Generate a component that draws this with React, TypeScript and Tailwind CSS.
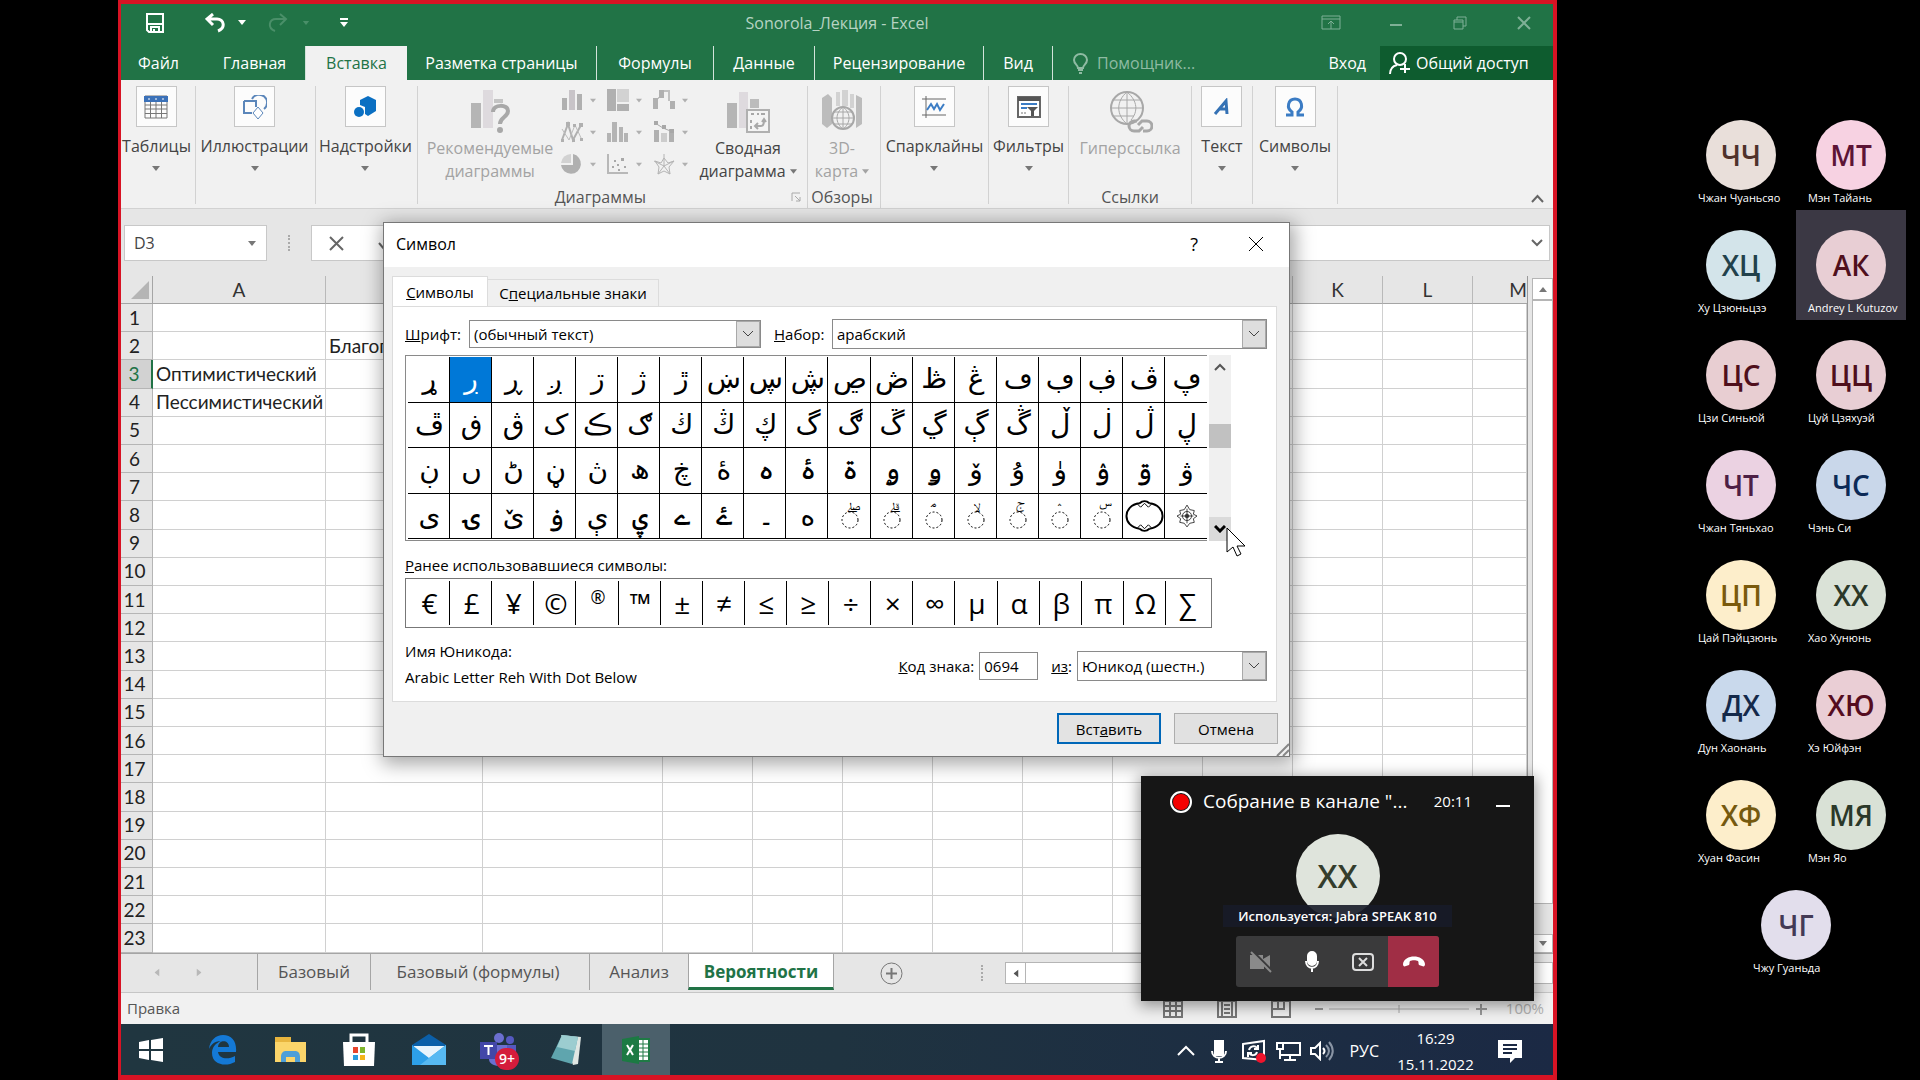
import React from 'react';

interface Participant {
    initials: string;
    name: string;
    colors: string;
    active?: boolean;
}

const participants: Participant[] = [
    { initials: 'ЧЧ', name: 'Чжан Чуаньсяо', colors: 'bg-[#e9dfda] text-[#4f322b]' },
    { initials: 'МТ', name: 'Мэн Тайань', colors: 'bg-[#f7d2e2] text-[#5c1436]' },
    { initials: 'ХЦ', name: 'Ху Цзюньцзэ', colors: 'bg-[#d3e4ea] text-[#22414b]' },
    { initials: 'АК', name: 'Andrey L Kutuzov', colors: 'bg-[#e8ced4] text-[#4f0f1c]', active: true },
    { initials: 'ЦС', name: 'Цзи Синьюй', colors: 'bg-[#e8ced2] text-[#4f0f1c]' },
    { initials: 'ЦЦ', name: 'Цуй Цзяхуэй', colors: 'bg-[#e8ced4] text-[#4f0f1c]' },
    { initials: 'ЧТ', name: 'Чжан Тяньхао', colors: 'bg-[#ebd2e2] text-[#4d1f45]' },
    { initials: 'ЧС', name: 'Чэнь Си', colors: 'bg-[#c9d7ea] text-[#0c2a57]' },
    { initials: 'ЦП', name: 'Цай Пэйцзюнь', colors: 'bg-[#fdeecb] text-[#7a5a0c]' },
    { initials: 'ХХ', name: 'Хао Хунюнь', colors: 'bg-[#dae2d7] text-[#2b3829]' },
    { initials: 'ДХ', name: 'Дун Хаонань', colors: 'bg-[#c9d9ec] text-[#14294a]' },
    { initials: 'ХЮ', name: 'Хэ Юйфэн', colors: 'bg-[#eaced5] text-[#540c20]' },
    { initials: 'ХФ', name: 'Хуан Фасин', colors: 'bg-[#fdeecb] text-[#75590f]' },
    { initials: 'МЯ', name: 'Мэн Яо', colors: 'bg-[#d9e1d6] text-[#2b3829]' },
    { initials: 'ЧГ', name: 'Чжу Гуаньда', colors: 'bg-[#e2deec] text-[#433a55]' },
];

const columns = [
    { id: 'A', width: 'w-[173px]' },
    { id: 'B', width: 'w-[157px]' },
    { id: 'C', width: 'w-[180px]' },
    { id: 'D', width: 'w-[90px]' },
    { id: 'E', width: 'w-[90px]' },
    { id: 'F', width: 'w-[90px]' },
    { id: 'G', width: 'w-[90px]' },
    { id: 'H', width: 'w-[90px]' },
    { id: 'I', width: 'w-[90px]' },
    { id: 'J', width: 'w-[90px]' },
    { id: 'K', width: 'w-[90px]' },
    { id: 'L', width: 'w-[90px]' },
    { id: 'M', width: '' },
];

const rows = Array.from({ length: 23 }, (_, i) => i + 1);

const cells: Record<string, string> = {
    B2: 'Благоп',
    A3: 'Оптимистический',
    A4: 'Пессимистический',
};

// U+0693 .. U+06DE, 4 rows of 19
const FIRST_CODE = 0x0693;
const SELECTED_CODE = 0x0694;
const symbolRows = [0, 1, 2, 3].map(r => Array.from({ length: 19 }, (_, c) => FIRST_CODE + r * 19 + c));

const recentSymbols = ['€', '£', '¥', '©', '®', '™', '±', '≠', '≤', '≥', '÷', '×', '∞', 'µ', 'α', 'β', 'π', 'Ω', '∑'];

const Caret: React.FC<{ className?: string }> = ({ className = '' }) => (
    <svg width="8" height="5" viewBox="0 0 8 5" className={className} aria-hidden="true">
        <path d="M0 0h8L4 5z" fill="currentColor" />
    </svg>
);

const Chevron: React.FC<{ className?: string }> = ({ className = '' }) => (
    <svg width="12" height="8" viewBox="0 0 12 8" className={className} fill="none" stroke="currentColor" aria-hidden="true">
        <path d="M1 1l5 5 5-5" />
    </svg>
);

const TitleBar = () => (
    <header className="grid h-[42px] grid-cols-3 items-center bg-[#217346] pb-[5px] text-white">
        <div className="flex h-full items-center pl-[24px]">
            <button aria-label="Сохранить" className="mr-[40px]">
                <svg width="20" height="20" viewBox="0 0 20 20" fill="none" stroke="white" strokeWidth="2">
                    <path d="M2 1h16v18H4l-2-2zM2 11h16M6 19v-5h8v5M9 16v3" />
                </svg>
            </button>
            <button aria-label="Отменить" className="flex items-center gap-[11px]">
                <svg width="22" height="20" viewBox="0 0 22 20" fill="none" stroke="white" strokeWidth="3">
                    <path d="M8 1L2 6l6 6M2 6h10c7 0 9 9 1 12" />
                </svg>
                <Caret />
            </button>
            <button aria-label="Вернуть" className="ml-[20px] flex items-center gap-[14px] text-[#4a8f69]">
                <svg width="22" height="20" viewBox="0 0 22 20" fill="none" stroke="currentColor" strokeWidth="2">
                    <path d="M14 1l6 5-6 6M20 6H10c-7 0-9 9-1 12" />
                </svg>
                <Caret className="h-1" />
            </button>
            <button aria-label="Настройка панели" className="ml-[29px]">
                <svg width="10" height="9" viewBox="0 0 10 9" fill="white">
                    <path d="M1 0h8v2H1zM1 4h8L5 9z" />
                </svg>
            </button>
        </div>
        <h1 className="text-center text-base text-[#b6d3c3]">Sonorola_Лекция - Excel</h1>
        <div className="flex items-center justify-end gap-[46px] pr-[20px] text-[#7fb096]">
            <button aria-label="Параметры ленты">
                <svg width="20" height="16" viewBox="0 0 20 16" fill="none" stroke="currentColor">
                    <path d="M1 1h18v13H1zM1 4h18M10 14V6M7 9l3-3 3 3" />
                </svg>
            </button>
            <button aria-label="Свернуть">
                <svg width="18" height="16" viewBox="0 0 18 16" fill="none" stroke="currentColor" strokeWidth="2">
                    <path d="M3 10h12" />
                </svg>
            </button>
            <button aria-label="Развернуть">
                <svg width="18" height="16" viewBox="0 0 18 16" fill="none" stroke="currentColor">
                    <path d="M3 5h9v9H3zM3 7h9M6 5V2h9v9h-3" />
                </svg>
            </button>
            <button aria-label="Закрыть">
                <svg width="18" height="16" viewBox="0 0 18 16" fill="none" stroke="currentColor" strokeWidth="2">
                    <path d="M3 2l12 12M15 2L3 14" />
                </svg>
            </button>
        </div>
    </header>
);

const ribbonTabs = [
    { label: 'Файл', className: 'w-[83px] pr-2' },
    { label: 'Главная', className: 'w-[102px] border-r' },
    { label: 'Вставка', className: 'w-[101px] bg-[#f1f1f1] text-[#217346]' },
    { label: 'Разметка страницы', className: 'w-[190px] border-r' },
    { label: 'Формулы', className: 'w-[117px] border-r' },
    { label: 'Данные', className: 'w-[101px] border-r' },
    { label: 'Рецензирование', className: 'w-[169px] border-r' },
    { label: 'Вид', className: 'w-[69px] border-r' },
];

const RibbonTabs = () => (
    <nav className="flex h-[34px] bg-[#217346] text-base text-white">
        {ribbonTabs.map(tab => (
            <button key={tab.label} className={`whitespace-nowrap border-white/80 ${tab.className}`}>
                {tab.label}
            </button>
        ))}
        <button className="ml-[20px] flex items-center gap-[9px] text-[#8fbba3]">
            <svg width="15" height="21" viewBox="0 0 15 21" fill="none" stroke="currentColor" strokeWidth="2">
                <path d="M5 15c0-3-4-4-4-8a6.500 6 0 0 1 13 0c0 4-4 5-4 8zM5 17h5M6 20h3" />
            </svg>
            Помощник...
        </button>
        <button className="ml-auto px-[14px]">Вход</button>
        <button className="flex w-[173px] items-center gap-[5px] bg-[#0e5c2f] pl-[9px]">
            <svg width="22" height="24" viewBox="0 0 22 24" fill="none" stroke="white" strokeWidth="2">
                <circle cx="11" cy="8" r="6" />
                <path d="M1 23c0-6 3-8 7-9M16 13v9M11 18h10" />
            </svg>
            Общий доступ
        </button>
    </nav>
);

interface CollapsedGroupProps {
    label: string;
    width: string;
    children: React.ReactNode;
}

const CollapsedGroup: React.FC<CollapsedGroupProps> = ({ label, width, children }) => (
    <div className={`mb-[4px] flex shrink-0 justify-center border-r border-[#d2d2d2] ${width}`}>
        <button className="flex flex-col items-center whitespace-nowrap text-base leading-[22px] text-[#444]">
            <span className="mb-[8px] flex h-[41px] w-[41px] items-center justify-center border border-[#c6c6c6] bg-[#fcfcfc]">
                {children}
            </span>
            {label}
            <Caret className="mt-[9px] text-[#777]" />
        </button>
    </div>
);

// the nine small chart buttons, all disabled
const chartIcons = [
    {
        label: 'Гистограмма',
        icon: (
            <>
                <path d="M1 9h5v12H1zM16 5h5v16h-5z" fill="#b0b0b0" />
                <path d="M8 1h6v20H8z" fill="#c8c4c8" />
            </>
        ),
    },
    {
        label: 'Иерархия',
        icon: (
            <>
                <path d="M0 0h9v22H0zM10 15h12v7H10z" fill="#b0b0b0" />
                <path d="M10 0h12v13H10z" fill="#d2d2d2" />
            </>
        ),
    },
    {
        label: 'Каскадная',
        icon: (
            <>
                <path d="M0 9h5v11H0zM6 1h5v8H6zM17 12h5v8h-5z" fill="#b0b0b0" />
                <path d="M5 9h1M11 2h5v10" fill="none" stroke="#c0c0c0" strokeWidth="2" />
            </>
        ),
    },
    {
        label: 'График',
        icon: (
            <>
                <path d="M1 19L7 3l5 16 8-15" fill="none" stroke="#b0b0b0" strokeWidth="2" />
                <path d="M1 8l7 11 6-15 7 15" fill="none" stroke="#bcbcbc" />
                <path d="M5 1h4v4H5zM18 2h4v4h-4zM0 18h3v3H0zM11 18h3v3h-3zM12 3h3v3h-3zM19 17h3v3h-3z" fill="#b0b0b0" />
            </>
        ),
    },
    {
        label: 'Статистическая',
        icon: <path d="M0 12h4v9H0zM5 1h5v20H5zM12 6h4v15h-4zM17 12h4v9h-4z" fill="#b4b4b4" />,
    },
    {
        label: 'Комбинированная',
        icon: (
            <>
                <path d="M1 9h5v12H1zM16 8h5v13h-5z" fill="#b0b0b0" />
                <path d="M8 12h6v9H8z" fill="#cccccc" />
                <path d="M2 2l8 5 10 4" fill="none" stroke="#a8a8a8" />
                <path d="M1 0h4v4H1zM9 4h4v4H9zM17 8h4v4h-4z" fill="#a8a8a8" />
            </>
        ),
    },
    {
        label: 'Круговая',
        icon: (
            <>
                <path d="M0 10A10 10 0 0 1 10 1v9z" fill="#d2d2d2" />
                <path d="M12 1a10 10 0 1 1-12 11h12z" fill="#b0b0b0" />
            </>
        ),
    },
    {
        label: 'Точечная',
        icon: (
            <>
                <path d="M1 1v19h20" fill="none" stroke="#b8b8b8" strokeWidth="2" />
                <path d="M5 13h2v2H5zM7 7h2v2H7zM10 11h2v2h-2zM14 5h3v3h-3zM17 13h2v2h-2zM11 16h2v2h-2z" fill="#a8a8a8" />
            </>
        ),
    },
    {
        label: 'Лепестковая',
        icon: (
            <path
                d="M11 1v12M11 13L1 8M11 13l10-5M11 13l-6 8M11 13l6 8M11 5L8 10 2 8l4 6-1 7 6-3 6 3-1-7 5-6-6 2z"
                fill="none"
                stroke="#b4b4b4"
            />
        ),
    },
];

const Ribbon = () => (
    <section className="flex h-[129px] border-b border-[#d2d2d2] bg-[#f1f1f1] pt-[6px] text-base text-[#444]">
        <CollapsedGroup label="Таблицы" width="w-[75px] pr-[3px]">
            <svg width="24" height="24" viewBox="0 0 24 24" fill="none">
                <path d="M1 1h22v22H1zM1 10h22M1 14h22M1 18.500h22M6.500 5v18M12 5v18M17.500 5v18" stroke="#777" />
                <path d="M0 1h24v6H0z" fill="#3b71b8" />
                <path d="M4 4h2M11 4h2M18 4h2" stroke="white" />
            </svg>
        </CollapsedGroup>
        <CollapsedGroup label="Иллюстрации" width="w-[120px] pr-[2px]">
            <svg width="24" height="24" viewBox="0 0 24 24" fill="none" stroke="#5b86ba">
                <path d="M1 6h12v6M1 6v12h8" strokeWidth="2" />
                <path d="M9 4a8 8 0 1 1 12 10" strokeWidth="2" />
                <path d="M15 12l5 6-5 6-5-6z" fill="white" />
            </svg>
        </CollapsedGroup>
        <CollapsedGroup label="Надстройки" width="w-[102px] pr-[2px]">
            <svg width="22" height="22" viewBox="0 0 22 22" fill="#0a6fc2">
                <path d="M14 0l8 4v11l-8 5-3-2v-7l-5-2V4z" />
                <circle cx="5" cy="16" r="5" />
            </svg>
        </CollapsedGroup>

        <div className="flex w-[390px] shrink-0 flex-col justify-between border-r border-[#d2d2d2]">
            <div className="flex pl-[7px]">
                <button disabled className="flex w-[130px] flex-col items-center leading-[23px] text-[#a3a3a3]">
                    <svg width="40" height="44" viewBox="0 0 40 44" className="mb-[3px] mt-1">
                        <path d="M1 13h10v25H1z" fill="#b5b5b5" />
                        <path d="M13 0h10v38H13z" fill="#dedade" />
                        <path d="M24 9h9v4h-9z" fill="#c4c4c4" />
                        <path d="M23 22c0-8 15-8 15-1 0 6-8 6-8 13" fill="none" stroke="#a8a8a8" strokeWidth="4" />
                        <circle cx="30" cy="40" r="3" fill="#a8a8a8" />
                    </svg>
                    <span>Рекомендуемые диаграммы</span>
                </button>
                <div className="grid grid-cols-3 content-start gap-y-[10px] pl-[6px] pt-[3px]">
                    {chartIcons.map(chart => (
                        <button key={chart.label} disabled aria-label={chart.label} className="flex w-[46px] items-center gap-[7px] text-[#b0b0b0]">
                            <svg width="22" height="22" viewBox="0 0 22 22">
                                {chart.icon}
                            </svg>
                            <Caret className="w-[6px]" />
                        </button>
                    ))}
                </div>
                <button className="flex w-[98px] flex-col items-center whitespace-nowrap leading-[23px]">
                    <svg width="44" height="44" viewBox="0 0 44 44" className="mb-[3px] mt-1">
                        <path d="M1 13h10v25H1z" fill="#b5b5b5" />
                        <path d="M13 2h9v36h-9z" fill="#dedade" />
                        <path d="M24 9h9v9h-9z" fill="#bcbcbc" />
                        <path d="M21 20h22v22H21z" fill="#f4f4f4" stroke="#b0b0b0" strokeWidth="2" />
                        <path d="M25 24h3M31 24h2M35 24h4M25 30v3M25 36v3M30 36h5c3 0 3-3 3-6M36 32l2-3 2 3M32 33l-3 3 3 3" fill="none" stroke="#a8a8a8" strokeWidth="2" />
                    </svg>
                    Сводная
                    <span className="flex items-center gap-1">
                        диаграмма <Caret className="w-[7px] text-[#777]" />
                    </span>
                </button>
            </div>
            <div className="flex items-center justify-end gap-[145px] pr-[6px] leading-[22px] text-[#555]">
                Диаграммы
                <svg width="10" height="10" viewBox="0 0 10 10" fill="none" stroke="#aaa">
                    <path d="M1 9V1h8M4 4l5 5M9 5v4H5" />
                </svg>
            </div>
        </div>

        <div className="flex w-[73px] shrink-0 flex-col items-center justify-between border-r border-[#d2d2d2] pr-1">
            <button disabled className="flex flex-col items-center leading-[23px] text-[#a3a3a3]">
                <svg width="42" height="44" viewBox="0 0 42 44" className="mb-[3px] mt-1">
                    <path d="M1 8l6-4 4 4v26l-5 4-5-4zM35 5l6 3v26l-6 4z" fill="#bcbcbc" />
                    <path d="M15 2h4v14h-4zM21 0h6v16h-6zM29 4h4v14h-4z" fill="#d2d2d2" />
                    <circle cx="22" cy="28" r="11" fill="#f1f1f1" stroke="#a8a8a8" strokeWidth="2" />
                    <path d="M11 28h22M13 22h18M13 34h18M22 17v22M22 17c-8 6-8 16 0 22M22 17c8 6 8 16 0 22" fill="none" stroke="#a8a8a8" />
                </svg>
                3D-
                <span className="flex items-center gap-1">
                    карта <Caret className="w-[7px]" />
                </span>
            </button>
            <span className="leading-[22px] text-[#555]">Обзоры</span>
        </div>

        <CollapsedGroup label="Спарклайны" width="w-[108px]">
            <svg width="24" height="22" viewBox="0 0 24 22" fill="none">
                <path d="M4 0v22M0 3h24M0 19h24" stroke="#666" />
                <path d="M5 14l4-6 3 5 3-5 3 6 4-6" stroke="#3b7cc4" strokeWidth="2" />
            </svg>
        </CollapsedGroup>
        <CollapsedGroup label="Фильтры" width="w-[80px]">
            <svg width="24" height="22" viewBox="0 0 24 22" fill="none">
                <path d="M1 1h22v20H1z" fill="white" stroke="#666" strokeWidth="2" />
                <path d="M1 1h22v4H1z" fill="#555" />
                <path d="M4 8h16M4 12h6" stroke="#3b7cc4" strokeWidth="2" />
                <path d="M4 17h6" stroke="#777" strokeDasharray="2 1" />
                <path d="M10 11h11l-4 4v5h-3v-5z" fill="#555" />
            </svg>
        </CollapsedGroup>
        <div className="mb-[4px] flex w-[123px] shrink-0 flex-col items-center justify-between border-r border-[#d2d2d2]">
            <button disabled className="flex flex-col items-center leading-[23px] text-[#a3a3a3]">
                <svg width="46" height="44" viewBox="0 0 46 44" className="mb-[3px] mt-1" fill="none" stroke="#a8a8a8">
                    <circle cx="20" cy="18" r="16" strokeWidth="2" />
                    <path d="M4 18h32M7 10h26M7 26h20M20 2v32M20 2c-11 9-11 23 0 32M20 2c11 9 11 20 4 28" />
                    <path d="M30 31h-3a4.500 4.500 0 0 0 0 10h5l4-4M36 41h4a4.500 4.500 0 0 0 0-10h-5l-4 4" strokeWidth="3" />
                </svg>
                Гиперссылка
            </button>
            <span className="-mb-[4px] leading-[22px] text-[#555]">Ссылки</span>
        </div>
        <CollapsedGroup label="Текст" width="w-[61px]">
            <svg width="18" height="18" viewBox="0 0 18 18" fill="none" stroke="#3572b5" strokeWidth="3">
                <path d="M2 16L13 3l1 13M6 11h8" />
            </svg>
        </CollapsedGroup>
        <CollapsedGroup label="Символы" width="w-[85px]">
            <svg width="20" height="20" viewBox="0 0 20 20" fill="none" stroke="#3b7cc4" strokeWidth="3">
                <path d="M1 18h6v-3C1 11 3 2 10 2s9 9 3 13v3h6" />
            </svg>
        </CollapsedGroup>
        <button aria-label="Свернуть ленту" className="mb-[1px] ml-auto mr-[9px] self-end pb-1 text-[#666]">
            <svg width="13" height="9" viewBox="0 0 13 9" fill="none" stroke="currentColor" strokeWidth="2">
                <path d="M1 8l5.500-6L12 8" />
            </svg>
        </button>
    </section>
);

const FormulaBar = () => (
    <div className="flex h-[67px] items-start bg-[#e6e6e6] pl-[3px] pr-[3px] pt-[16px]">
        <div className="flex h-[36px] w-[143px] items-center border border-[#c8c8c8] bg-white pr-[9px]">
            <input aria-label="Имя" defaultValue="D3" className="w-full min-w-0 px-[9px] text-base text-[#444] outline-none" />
            <Caret className="w-[10px] shrink-0 text-[#777]" />
        </div>
        <div className="flex w-[44px] justify-center self-stretch pt-[10px]">
            <span className="h-[16px] border-l-2 border-dotted border-[#aaa]" />
        </div>
        <div className="flex h-[36px] flex-1 items-center border border-[#c8c8c8] bg-white pl-[16px] pr-[6px] text-[#666]">
            <button aria-label="Отмена">
                <svg width="17" height="15" viewBox="0 0 17 15" fill="none" stroke="currentColor" strokeWidth="2">
                    <path d="M2 1l13 13M15 1L2 14" />
                </svg>
            </button>
            <button aria-label="Ввод" className="ml-[33px]">
                <svg width="16" height="14" viewBox="0 0 16 14" fill="none" stroke="currentColor" strokeWidth="2">
                    <path d="M1 7l5 6L15 1" />
                </svg>
            </button>
            <input aria-label="Строка формул" className="flex-1 outline-none" />
            <Chevron className="stroke-2" />
        </div>
    </div>
);

const Sheet = () => (
    <div className="flex min-h-0 flex-1 bg-[#e6e6e6]">
        <table className="h-full flex-1 table-fixed border-separate border-spacing-0 border-r border-[#999] font-[Lato,'Open_Sans',sans-serif] text-[19px] leading-[22px] text-[#222]">
            <thead>
                <tr className="h-[28px] bg-[#e6e6e6] text-[#333]">
                    <th aria-label="Выделить все" className="w-[32px] border-b border-r border-[#a5a5a5] p-0 align-bottom">
                        <svg width="18" height="18" viewBox="0 0 18 18" className="mb-1 ml-[10px]">
                            <path d="M18 0v18H0z" fill="#b5b5b5" />
                        </svg>
                    </th>
                    {columns.map(col => (
                        <th
                            key={col.id}
                            className={`border-b border-[#a5a5a5] p-0 font-normal ${col.width} ${col.id === 'M' ? 'text-right' : 'border-r border-r-[#b9b9b9]'}`}
                        >
                            {col.id}
                        </th>
                    ))}
                </tr>
            </thead>
            <tbody>
                {rows.map(row => (
                    <tr key={row}>
                        <th
                            scope="row"
                            className={`border-b border-[#b5b5b5] p-0 pr-1 text-center font-normal ${row === 3 ? 'border-r-2 border-r-[#217346] bg-[#d2d2d2] text-[#217346]' : 'border-r bg-[#e6e6e6]'}`}
                        >
                            {row}
                        </th>
                        {columns.map(col => (
                            <td key={col.id} className="overflow-hidden whitespace-nowrap border-b border-r border-[#d0d0d0] bg-white p-0 pl-[3px]">
                                {cells[col.id + row]}
                            </td>
                        ))}
                    </tr>
                ))}
            </tbody>
        </table>
        <div className="ml-[4px] flex w-[21px] flex-col pt-[2px]">
            <button aria-label="Прокрутить вверх" className="flex h-[22px] items-center justify-center border border-[#b5b5b5] bg-white text-[#777]">
                <Caret className="rotate-180" />
            </button>
            <div className="flex-1 border border-[#b5b5b5] bg-white" />
            <div className="h-[30px]" />
            <button aria-label="Прокрутить вниз" className="flex h-[19px] items-center justify-center border border-[#b5b5b5] bg-white text-[#777]">
                <Caret />
            </button>
        </div>
    </div>
);

const SheetTabs = () => (
    <div className="flex h-[40px] items-start border-b border-t border-b-[#c6c6c6] border-t-[#a5a5a5] bg-[#e6e6e6] text-[17px] text-[#555]">
        <div className="flex h-[36px] w-[137px] items-center gap-[34px] border-r border-[#a5a5a5] pl-[32px] text-[#b8b8b8]">
            <button aria-label="Предыдущий лист"><Caret className="rotate-90" /></button>
            <button aria-label="Следующий лист"><Caret className="-rotate-90" /></button>
        </div>
        <button className="h-[36px] w-[113px] border-r border-[#a5a5a5]">Базовый</button>
        <button className="h-[36px] w-[219px] border-r border-[#a5a5a5] pr-[4px]">Базовый (формулы)</button>
        <button className="h-[36px] w-[98px]">Анализ</button>
        <button className="h-[36px] w-[146px] border-x border-b-[3px] border-x-[#a5a5a5] border-b-[#217346] bg-white pt-[3px] font-bold text-[#217346]">Вероятности</button>
        <button aria-label="Новый лист" className="ml-[46px] mt-[8px]">
            <svg width="23" height="23" viewBox="0 0 23 23" fill="none" stroke="#777">
                <circle cx="11.500" cy="11.500" r="10.500" />
                <path d="M11.500 6v11M6 11.500h11" strokeWidth="2" />
            </svg>
        </button>
        <span className="ml-[78px] mt-[11px] h-[16px] border-l-2 border-dotted border-[#aaa]" />
        <div className="ml-[22px] mt-[8px] flex h-[22px] flex-1 border border-[#b5b5b5] bg-white">
            <button aria-label="Прокрутить влево" className="flex w-[20px] items-center justify-center border-r border-[#b5b5b5] text-[#555]">
                <Caret className="rotate-90" />
            </button>
        </div>
    </div>
);

const StatusBar = () => (
    <footer className="flex h-[31px] items-center bg-[#f1f1f1] text-[15px] text-[#555]">
        <span className="pl-[6px]">Правка</span>
        <div className="ml-auto flex items-center pr-[9px] text-[#777]">
            <button aria-label="Обычный">
                <svg width="20" height="18" viewBox="0 0 20 18" fill="none" stroke="currentColor" strokeWidth="2">
                    <path d="M1 1h18v16H1zM7 1v16M13 1v16M1 6h18M1 11h18" />
                </svg>
            </button>
            <button aria-label="Разметка страницы" className="ml-[34px]">
                <svg width="20" height="18" viewBox="0 0 20 18" fill="none" stroke="currentColor" strokeWidth="2">
                    <path d="M1 1h18v16H1zM5 1v16M15 1v16M7 5h6M7 9h6M7 13h6" />
                </svg>
            </button>
            <button aria-label="Страничный" className="ml-[34px]">
                <svg width="20" height="18" viewBox="0 0 20 18" fill="none" stroke="currentColor" strokeWidth="2">
                    <path d="M1 1h18v16H1zM1 9h12V1M7 1v8" />
                </svg>
            </button>
            <svg width="172" height="14" viewBox="0 0 172 14" className="ml-[24px]" fill="none" stroke="#aaa">
                <path d="M0 7h8M161 7h12M166 2v11" strokeWidth="2" stroke="#999" />
                <path d="M14 7h140M84 3v8" />
            </svg>
            <span className="ml-[19px] text-[#b0b0b0]">100%</span>
        </div>
    </footer>
);

const Taskbar = () => (
    <nav className="flex h-[51px] items-center bg-linear-to-r from-[#203640] via-[#1f3340] to-[#1b2944] text-white">
        <button aria-label="Пуск" className="flex w-[60px] justify-center">
            <svg width="24" height="24" viewBox="0 0 24 24" fill="white">
                <path d="M0 4l10-2v9H0zM12 2l12-2v11H12zM0 13h10v9L0 20zM12 13h12v11l-12-2z" />
            </svg>
        </button>
        <button aria-label="Edge" className="flex w-[84px] justify-center">
            <svg width="28" height="30" viewBox="0 0 28 30" fill="#1479d6">
                <path d="M0 14C1 5 7 0 14 0c9 0 14 7 13 17H9c1 7 10 8 17 4v6C17 32 3 30 3 18c0-6 4-10 9-12C5 6 2 10 0 14zM9 12h11c0-7-10-8-11 0z" />
            </svg>
        </button>
        <button aria-label="Проводник" className="flex w-[52px] justify-center">
            <svg width="32" height="27" viewBox="0 0 32 27">
                <path d="M0 1h16v5h15v20H0z" fill="#e8b53e" />
                <path d="M0 6h31v20H0z" fill="#fbd56a" />
                <path d="M6 26v-5c0-5 3-6 5-6h9c3 0 5 2 5 6v5h-5v-5h-9v5z" fill="#4d9fd8" />
            </svg>
        </button>
        <button aria-label="Store" className="flex w-[84px] justify-center">
            <svg width="34" height="34" viewBox="0 0 34 34">
                <path d="M9 10V2h16v8" fill="none" stroke="white" strokeWidth="3" />
                <path d="M1 9h32l-1 24H2z" fill="white" />
                <path d="M11 14h5v6h-5z" fill="#e8452c" />
                <path d="M18 14h5v6h-5z" fill="#7fb52b" />
                <path d="M11 22h5v5h-5z" fill="#2a9de0" />
                <path d="M18 22h5v5h-5z" fill="#f4b41a" />
            </svg>
        </button>
        <button aria-label="Почта" className="flex w-[56px] justify-center">
            <svg width="34" height="31" viewBox="0 0 34 31">
                <path d="M0 11L17 0l17 11v20H0z" fill="#0b5fa8" />
                <path d="M2 12h30v12H2z" fill="#e8f4fc" />
                <path d="M0 11l17 13 17-13v20H0z" fill="#2d9fe8" />
                <path d="M17 24l17-13v20H8z" fill="#57b9f2" />
            </svg>
        </button>
        <button aria-label="Teams" className="relative flex w-[82px] justify-center">
            <svg width="36" height="34" viewBox="0 0 36 34">
                <circle cx="19" cy="5" r="5" fill="#6b6fd0" />
                <circle cx="30" cy="7" r="4" fill="#5559c0" />
                <path d="M24 12h12v12c0 5-8 7-12 3z" fill="#5559c0" />
                <path d="M9 12h18v14c0 9-18 9-18 0z" fill="#6b6fd0" />
                <path d="M0 9h17v17H0z" fill="#4347a8" />
                <path d="M4 13h9M8.500 13v9" stroke="white" strokeWidth="2" />
            </svg>
            <span className="absolute right-[20px] top-[15px] flex h-[22px] w-[24px] items-center justify-center rounded-full bg-[#d41c3c] text-sm font-semibold">9+</span>
        </button>
        <button aria-label="Блокнот" className="flex w-[63px] justify-center pr-[10px]">
            <svg width="32" height="32" viewBox="0 0 32 32">
                <path d="M11 1l20 2-3 27-5 1z" fill="#dfe6e2" />
                <path d="M12 1l16 2-6 27L1 24z" fill="#5fa5ae" />
                <path d="M12 1l16 2-3 14L7 13z" fill="#9ccdd0" />
            </svg>
        </button>
        <button aria-label="Excel" className="flex h-full w-[68px] items-center justify-center bg-[#4b606b]">
            <svg width="28" height="28" viewBox="0 0 28 28">
                <path d="M14 3h13v22H14z" fill="white" stroke="#1f7a45" strokeWidth="2" />
                <path d="M16 8h10M16 12h10M16 16h10M16 20h10M21 4v20" stroke="#1f7a45" />
                <path d="M0 3l17-3v28L0 25z" fill="#1c7a43" />
                <path d="M5 9l6 10M11 9L5 19" stroke="white" strokeWidth="2" />
            </svg>
        </button>

        <div className="ml-auto flex items-center pr-[31px] pt-[2px] text-[15px]">
            <button aria-label="Скрытые значки">
                <svg width="18" height="12" viewBox="0 0 18 12" fill="none" stroke="white" strokeWidth="2">
                    <path d="M1 10l8-8 8 8" />
                </svg>
            </button>
            <button aria-label="Микрофон" className="ml-[16px]">
                <svg width="16" height="24" viewBox="0 0 16 24" fill="none" stroke="white" strokeWidth="2">
                    <path d="M4 2h8v14H4z" fill="white" />
                    <path d="M1 12c0 9 14 9 14 0M8 19v4M4 23h8" />
                </svg>
            </button>
            <button aria-label="Обновление" className="ml-[14px]">
                <svg width="26" height="24" viewBox="0 0 26 24" fill="none" stroke="white" strokeWidth="2">
                    <path d="M2 5l21-3v19L2 19z" />
                    <path d="M8 11c1-4 6-5 8-2M17 6v4h-4M16 13c-1 4-6 4-8 1M7 18v-4h4" />
                    <circle cx="20" cy="19" r="5" fill="#f0142c" stroke="none" />
                </svg>
            </button>
            <button aria-label="Сеть" className="ml-[9px]">
                <svg width="25" height="20" viewBox="0 0 25 20" fill="none" stroke="white" strokeWidth="2">
                    <path d="M8 2h16v12H5M14 14v4M8 19h12M1 2h6v6H1zM4 8v10" />
                </svg>
            </button>
            <button aria-label="Громкость" className="ml-[9px]">
                <svg width="24" height="20" viewBox="0 0 24 20" fill="none" stroke="white" strokeWidth="2">
                    <path d="M1 7h4l5-5v16l-5-5H1zM13 7c2 2 2 4 0 6" />
                    <path d="M16 4c4 4 4 8 0 12M19 1c5 6 5 12 0 18" stroke="#8994a4" />
                </svg>
            </button>
            <button className="ml-[15px] text-base">РУС</button>
            <div className="ml-[18px] w-[77px] text-center leading-[26px]">
                <time className="block">16:29</time>
                <time className="block">15.11.2022</time>
            </div>
            <button aria-label="Уведомления" className="ml-[24px]">
                <svg width="24" height="24" viewBox="0 0 24 24">
                    <path d="M0 1h24v18h-7l-5 5v-5H0z" fill="white" />
                    <path d="M5 6h14M5 10h14M5 14h9" stroke="#1b2944" strokeWidth="2" />
                </svg>
            </button>
        </div>
    </nav>
);

interface DropdownProps {
    id: string;
    value: string;
    className: string;
}

const Dropdown: React.FC<DropdownProps> = ({ id, value, className }) => (
    <div className={`grid border border-[#8a8a8a] bg-white ${className}`}>
        <select id={id} className="col-start-1 row-start-1 w-full appearance-none px-[4px] outline-none">
            <option>{value}</option>
        </select>
        <span className="pointer-events-none col-start-1 row-start-1 flex w-[24px] items-center justify-center justify-self-end border border-[#a9a9a9] bg-[#dedede] text-[#444]">
            <Chevron />
        </span>
    </div>
);

const SymbolGlyph: React.FC<{ code: number }> = ({ code }) => {
    // Quranic marks sit above a dotted placeholder circle
    if (code >= 0x06d6 && code <= 0x06dc) {
        return (
            <span className="flex flex-col items-center pb-[6px]">
                <span className="h-[14px] w-[22px] text-center text-[28px] leading-[44px]">{'\u00a0' + String.fromCharCode(code)}</span>
                <svg width="18" height="18" viewBox="0 0 18 18" fill="none" stroke="black" strokeDasharray="2 2" aria-hidden="true">
                    <circle cx="9" cy="9" r="8" />
                </svg>
            </span>
        );
    }
    if (code === 0x06dd) {
        return (
            <svg width="40" height="34" viewBox="0 0 40 34" fill="none" stroke="black" strokeWidth="2" aria-label="End of Ayah">
                <path d="M15 4C-3 6-3 28 15 30M25 4c18 2 18 24 0 26M15 4c3-3 7-3 10 0M15 30c3 3 7 3 10 0" />
                <path d="M13 5l3 3 4-4 4 4 3-3M13 29l3-3 4 4 4-4 3 3" strokeWidth="1" />
            </svg>
        );
    }
    if (code === 0x06de) {
        return (
            <svg width="20" height="24" viewBox="0 0 22 24" fill="none" stroke="#333" aria-label="Rub El Hizb">
                <path d="M11 0l3 5 5 1-1 4 4 2-4 3 1 4-5 1-3 4-3-4-5-1 1-4-4-3 4-2-1-4 5-1z" />
                <circle cx="11" cy="12" r="5" />
                <circle cx="11" cy="12" r="2" fill="#333" />
                <path d="M11 4v16M4 12h14" />
            </svg>
        );
    }
    return <>{String.fromCharCode(code)}</>;
};

const SymbolDialog = () => (
    <div
        role="dialog"
        aria-label="Символ"
        className="absolute left-[262px] top-[218px] flex w-[907px] flex-col border border-[#777] bg-[#f0f0f0] text-[15px] leading-5 text-black shadow-[2px_4px_18px_3px_rgba(0,0,0,0.35)]"
    >
        <div className="flex h-[44px] items-center bg-white pb-[2px] pl-[12px] pr-[25px]">
            <h2 className="text-base">Символ</h2>
            <button aria-label="Справка" className="ml-auto text-lg">?</button>
            <button aria-label="Закрыть" className="ml-[50px]">
                <svg width="16" height="16" viewBox="0 0 16 16" fill="none" stroke="black">
                    <path d="M1 1l14 14M15 1L1 15" />
                </svg>
            </button>
        </div>

        <div role="tablist" className="mt-[9px] flex items-end pl-[8px]">
            <button role="tab" aria-selected="true" className="-mb-px h-[31px] w-[96px] border border-b-0 border-[#dcdcdc] bg-white">
                <u>С</u>имволы
            </button>
            <button role="tab" aria-selected="false" className="h-[27px] w-[171px] border border-b-0 border-l-0 border-[#dcdcdc]">
                С<u>п</u>ециальные знаки
            </button>
        </div>

        <div className="ml-[8px] mr-[12px] border border-[#dcdcdc] bg-white pb-[14px] pl-[12px] pr-[9px] pt-[12px]">
            <div className="flex items-center">
                <label htmlFor="font" className="w-[64px]"><u>Ш</u>рифт:</label>
                <Dropdown id="font" value="(обычный текст)" className="h-[28px] w-[292px]" />
                <label htmlFor="subset" className="ml-[13px] w-[58px]"><u>Н</u>абор:</label>
                <Dropdown id="subset" value="арабский" className="h-[30px] flex-1" />
            </div>

            <div className="mt-[6px] flex h-[186px]">
                <div className="w-[802px] border-y border-l border-[#8a8a8a] py-px pl-[2px]">
                    <table className="h-full w-full table-fixed border-separate border-spacing-0 font-['DejaVu_Sans',sans-serif] text-[28px] leading-none">
                        <tbody>
                            {symbolRows.map(line => (
                                <tr key={line[0]} className="h-[45px]">
                                    {line.map(code => (
                                        <td
                                            key={code}
                                            className={`border-b border-r border-black p-0 pl-[2px] text-center last:border-r-0 ${code === SELECTED_CODE ? 'bg-[#0078d7] text-white' : ''}`}
                                        >
                                            <span className="flex h-[44px] items-center justify-center overflow-hidden">
                                                <SymbolGlyph code={code} />
                                            </span>
                                        </td>
                                    ))}
                                </tr>
                            ))}
                        </tbody>
                    </table>
                </div>
                <div className="ml-[2px] flex w-[22px] flex-col items-center bg-[#f0f0f0]">
                    <button aria-label="Вверх" className="flex h-[24px] w-full items-center justify-center text-[#555]">
                        <Chevron className="rotate-180 stroke-2" />
                    </button>
                    <div className="mt-[45px] h-[24px] w-full bg-[#c1c1c1]" />
                    <button aria-label="Вниз" className="mt-auto flex h-[24px] w-full items-center justify-center bg-[#dadada] text-black">
                        <Chevron className="stroke-[3px]" />
                    </button>
                </div>
            </div>

            <p className="mt-[14px]"><u>Р</u>анее использовавшиеся символы:</p>
            <div className="mt-[3px] flex h-[50px] w-[807px] border border-[#777] py-[2px] pl-[2px] pr-[4px] text-[28px]">
                {recentSymbols.map(s => (
                    <button key={s} className="flex w-0 flex-1 items-center justify-center border-r border-black pl-[2px] last:border-r-0">
                        {s === '®' ? <span className="pb-3 text-lg">{s}</span> : s}
                    </button>
                ))}
            </div>

            <div className="mt-[13px] flex items-start justify-between">
                <div>
                    <p>Имя Юникода:</p>
                    <p className="mt-[6px]">Arabic Letter Reh With Dot Below</p>
                </div>
                <div className="mt-[10px] flex items-center">
                    <label htmlFor="code" className="mr-[5px]"><u>К</u>од знака:</label>
                    <input id="code" defaultValue="0694" className="h-[28px] w-[59px] border border-[#8a8a8a] px-[4px] outline-none" />
                    <label htmlFor="encoding" className="ml-[13px] mr-[5px]"><u>из</u>:</label>
                    <Dropdown id="encoding" value="Юникод (шестн.)" className="h-[30px] w-[190px]" />
                </div>
            </div>
        </div>

        <div className="mt-[11px] flex justify-end gap-[13px] pb-[12px] pr-[11px]">
            <button className="h-[31px] w-[104px] border-2 border-[#0067b8] bg-[#e3e3e3]">Вст<u>а</u>вить</button>
            <button className="h-[31px] w-[104px] border border-[#adadad] bg-[#e1e1e1]">Отмена</button>
        </div>
        <svg width="13" height="13" viewBox="0 0 13 13" className="absolute bottom-0 right-0" stroke="#888" strokeWidth="2">
            <path d="M1 13L13 1M7 13l6-6" />
        </svg>
    </div>
);

const CallWindow = () => (
    <div className="absolute left-[1020px] top-[772px] flex h-[225px] w-[393px] flex-col items-center bg-[#161616] text-white shadow-[0_3px_14px_2px_rgba(0,0,0,0.4)]">
        <div className="flex h-[51px] w-full items-center pl-[28px] pr-[24px]">
            <svg width="24" height="24" viewBox="0 0 24 24">
                <circle cx="12" cy="12" r="10" fill="#161616" stroke="white" strokeWidth="2" />
                <circle cx="12" cy="12" r="8" fill="#f40000" />
            </svg>
            <span className="ml-[10px] text-[19px]">Собрание в канале "...</span>
            <time className="ml-auto text-[15px]">20:11</time>
            <button aria-label="Свернуть" className="ml-[24px] flex h-[10px] w-[14px] items-end">
                <span className="h-[2px] w-full bg-white" />
            </button>
        </div>
        <div className="mt-[7px] flex h-[84px] w-[84px] items-center justify-center rounded-full bg-[#dfe4dc] text-[32px] font-semibold text-[#343d2c]">
            ХХ
        </div>
        <p className="-mt-[13px] bg-[#171b28]/90 px-[15px] text-[13px] font-semibold leading-[22px]">Используется: Jabra SPEAK 810</p>
        <div className="mt-[9px] grid h-[51px] w-[203px] grid-cols-4 overflow-hidden rounded-[3px] bg-[#3a3a3b]">
            <button aria-label="Камера" className="flex items-center justify-center">
                <svg width="24" height="22" viewBox="0 0 24 22">
                    <path d="M1 4h13v4l7-4v14l-6-3v3H1z" fill="#8a8a8a" />
                    <path d="M3 0l20 20" stroke="#3a3a3b" strokeWidth="3" />
                    <path d="M2 1l20 20" stroke="#8a8a8a" strokeWidth="2" />
                </svg>
            </button>
            <button aria-label="Микрофон" className="flex items-center justify-center">
                <svg width="16" height="22" viewBox="0 0 16 22" fill="none" stroke="white" strokeWidth="2">
                    <rect x="4" y="1" width="8" height="13" rx="4" fill="white" />
                    <path d="M2 10c0 9 12 9 12 0M8 17v4" />
                </svg>
            </button>
            <button aria-label="Остановить показ" className="flex items-center justify-center">
                <svg width="22" height="18" viewBox="0 0 22 18" fill="none" stroke="#ddd" strokeWidth="2">
                    <rect x="1" y="1" width="20" height="16" rx="3" />
                    <path d="M7 5l8 8M15 5l-8 8" />
                </svg>
            </button>
            <button aria-label="Завершить" className="flex items-center justify-center bg-[#a02e45]">
                <svg width="22" height="11" viewBox="0 0 22 11" fill="white">
                    <path d="M0 8C1-2 21-2 22 8c0 2-1 3-3 2l-3-1c-1-1 0-3-1-4-2-1-6-1-8 0-1 1 0 3-1 4l-3 1c-2 1-3 0-3-2z" />
                </svg>
            </button>
        </div>
    </div>
);

const ParticipantTile: React.FC<{ participant: Participant }> = ({ participant }) => (
    <li className={`flex h-[110px] w-[110px] flex-col items-center pt-[20px] ${participant.active ? 'bg-[#3b3844]' : ''}`}>
        <div className={`flex h-[70px] w-[70px] shrink-0 items-center justify-center rounded-full text-[28px] font-semibold ${participant.colors}`}>
            {participant.initials}
        </div>
        <span className="w-full whitespace-nowrap pl-[12px] text-[11px] leading-4 text-white">{participant.name}</span>
    </li>
);

const App = () => (
    <div className="flex h-screen min-h-[1080px] overflow-hidden bg-black pl-[118px] font-['Open_Sans',sans-serif]">
        <main className="relative flex min-w-0 flex-1 flex-col border-b-[5px] border-l-[3px] border-r-4 border-t-4 border-[#d81324]">
            <TitleBar />
            <RibbonTabs />
            <Ribbon />
            <FormulaBar />
            <Sheet />
            <SheetTabs />
            <StatusBar />
            <Taskbar />
            <SymbolDialog />
            <CallWindow />
            <svg width="20" height="30" viewBox="0 0 20 30" className="absolute left-[1105px] top-[523px]" aria-hidden="true">
                <path d="M1 1v24l6-5 4 9 4-2-4-8h8z" fill="white" stroke="black" />
            </svg>
        </main>
        <aside className="w-[363px] shrink-0 pl-[129px] pt-[100px]">
            <ul className="flex w-[220px] flex-wrap justify-center">
                {participants.map(p => (
                    <ParticipantTile key={p.name} participant={p} />
                ))}
            </ul>
        </aside>
    </div>
);

export default App;
